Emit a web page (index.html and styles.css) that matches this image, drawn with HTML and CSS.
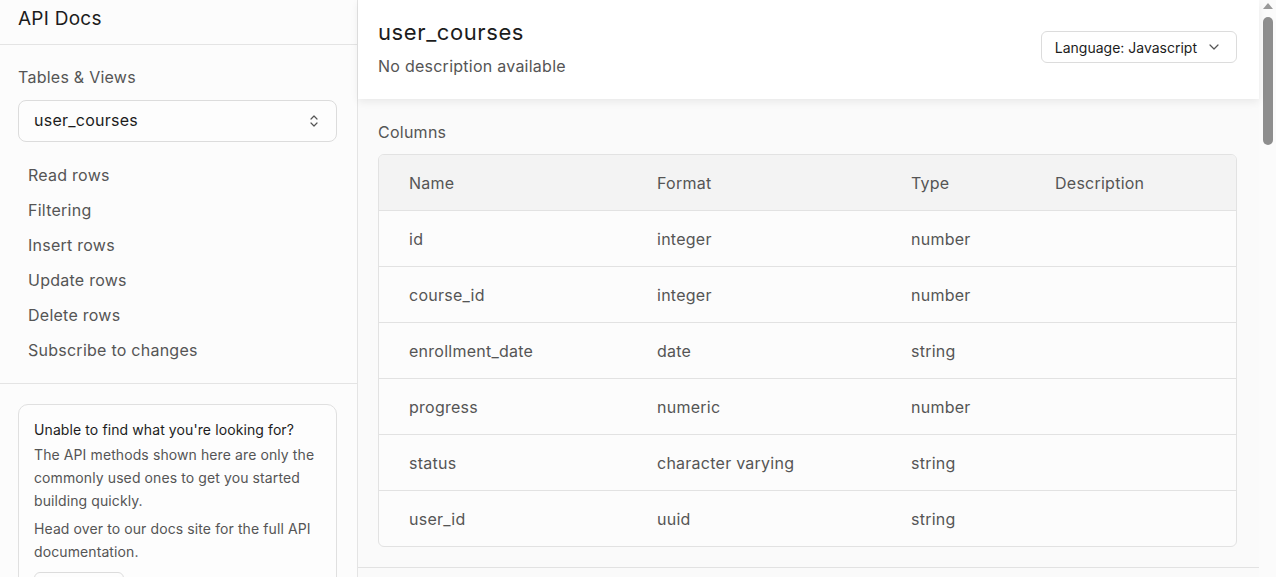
FILE: index.html
```html
<!DOCTYPE html>
<html>
<head>
<meta charset="utf-8">
<title>API Docs</title>
<link rel="stylesheet" href="styles.css">
</head>
<body>
<div class="app">
  <aside class="sidebar">
    <div class="side-head">API Docs</div>
    <div class="side-section">
      <div class="side-label">Tables &amp; Views</div>
      <div class="select">
        <span>user_courses</span>
        <svg class="updown" width="12" height="16" viewBox="0 0 12 16" fill="none" stroke="#555" stroke-width="1.2" stroke-linecap="round" stroke-linejoin="round"><path d="M3 6l3-3 3 3"/><path d="M3 10l3 3 3-3"/></svg>
      </div>
      <nav class="nav">
        <div class="nav-item">Read rows</div>
        <div class="nav-item">Filtering</div>
        <div class="nav-item">Insert rows</div>
        <div class="nav-item">Update rows</div>
        <div class="nav-item">Delete rows</div>
        <div class="nav-item">Subscribe to changes</div>
      </nav>
    </div>
    <div class="side-bottom">
      <div class="help-card">
        <div class="help-title">Unable to find what you're looking for?</div>
        <p class="help-text">The API methods shown here are only the commonly used ones to get you started building quickly.</p>
        <p class="help-text">Head over to our docs site for the full API documentation.</p>
        <div class="help-btn"></div>
      </div>
    </div>
  </aside>
  <main class="main">
    <div class="content">
      <header class="main-head">
        <div class="head-text">
          <h1 class="title">user_courses</h1>
          <div class="subtitle">No description available</div>
        </div>
        <div class="lang-btn">
          <span>Language: Javascript</span>
          <svg width="10" height="6" viewBox="0 0 10 6" fill="none" stroke="#555" stroke-width="1.2" stroke-linecap="round" stroke-linejoin="round"><path d="M1 1l4 4 4-4"/></svg>
        </div>
      </header>
      <section class="columns">
        <div class="section-label">Columns</div>
        <div class="table">
          <div class="row head"><div>Name</div><div>Format</div><div>Type</div><div>Description</div></div>
          <div class="row"><div>id</div><div>integer</div><div>number</div><div></div></div>
          <div class="row"><div>course_id</div><div>integer</div><div>number</div><div></div></div>
          <div class="row"><div>enrollment_date</div><div>date</div><div>string</div><div></div></div>
          <div class="row"><div>progress</div><div>numeric</div><div>number</div><div></div></div>
          <div class="row"><div>status</div><div>character varying</div><div>string</div><div></div></div>
          <div class="row"><div>user_id</div><div>uuid</div><div>string</div><div></div></div>
        </div>
      </section>
      <div class="next-divider"></div>
    </div>
    <div class="scrollbar">
      <div class="sb-arrow"></div>
      <div class="sb-thumb"></div>
    </div>
  </main>
</div>
</body>
</html>
```

FILE: styles.css
```css
* { box-sizing: border-box; }
html, body { margin: 0; padding: 0; height: 100%; }
body {
  font-family: Inter, "Noto Sans", sans-serif;
  color: #1c1c1c;
  background: #fafafa;
  overflow: hidden;
  letter-spacing: 0.25px;
}
.app { display: flex; height: 100vh; }

.sidebar {
  width: 358px;
  flex: none;
  border-right: 1px solid #e4e4e4;
  background: #fcfcfc;
  display: flex;
  flex-direction: column;
  overflow: hidden;
}
.side-head {
  height: 45px;
  border-bottom: 1px solid #e4e4e4;
  padding: 7px 18px 0;
  font-size: 19px;
  line-height: 24px;
  color: #1c1c1c;
  flex: none;
}
.side-section {
  padding: 21px 20px 15px 18px;
  border-bottom: 1px solid #e4e4e4;
  flex: none;
}
.side-label {
  font-size: 16px;
  line-height: 22px;
  color: #555;
  margin-bottom: 12px;
}
.select {
  height: 42px;
  border: 1px solid #dcdcdc;
  border-radius: 8px;
  background: #fdfdfd;
  display: flex;
  align-items: center;
  justify-content: space-between;
  padding: 0 16px 0 15px;
  font-size: 16px;
  color: #1c1c1c;
}
.select span { margin-top: -3px; }
.updown { display: block; }
.nav { padding: 16px 10px 0; display: flex; flex-direction: column; }
.nav-item {
  height: 35px;
  line-height: 35px;
  font-size: 16px;
  color: #555;
}
.side-bottom { padding: 20px 20px 20px 18px; }
.help-card {
  border: 1px solid #e0e0e0;
  border-radius: 10px;
  background: #fdfdfd;
  padding: 14px 15px 20px;
  letter-spacing: 0.1px;
}
.help-title {
  font-size: 14px;
  line-height: 22px;
  color: #1c1c1c;
  margin-bottom: 2px;
}
.help-text {
  margin: 0 0 5px;
  font-size: 14px;
  line-height: 23px;
  color: #555;
}
.help-btn {
  margin-top: 9px;
  width: 90px;
  height: 28px;
  border: 1px solid #dcdcdc;
  border-radius: 6px;
}

.main { flex: 1; display: flex; min-width: 0; }
.content { flex: 1; min-width: 0; }
.main-head {
  height: 99px;
  background: #fff;
  box-shadow: 0 3px 8px rgba(0, 0, 0, 0.07);
  display: flex;
  justify-content: space-between;
  align-items: flex-start;
  padding: 18px 22px 0 20px;
  position: relative;
}
.title {
  margin: 0;
  font-size: 22px;
  line-height: 28px;
  font-weight: 400;
  letter-spacing: 0.6px;
  color: #1c1c1c;
}
.subtitle {
  margin-top: 9px;
  font-size: 16px;
  line-height: 22px;
  color: #555;
}
.lang-btn {
  margin-top: 13px;
  height: 32px;
  border: 1px solid #dcdcdc;
  border-radius: 6px;
  display: flex;
  align-items: center;
  gap: 12px;
  padding: 0 17px 0 13px;
  font-size: 14px;
  letter-spacing: 0;
  color: #1c1c1c;
  background: #fff;
}
.columns { padding: 22px 22px 20px 20px; }
.section-label {
  font-size: 16px;
  line-height: 22px;
  color: #555;
  margin-bottom: 11px;
}
.table {
  border: 1px solid #e2e2e2;
  border-radius: 6px;
  background: #fcfcfc;
  overflow: hidden;
}
.row {
  display: grid;
  grid-template-columns: 248px 254px 144px 1fr;
  height: 56px;
  align-items: center;
  border-top: 1px solid #e2e2e2;
  font-size: 16px;
  color: #555;
}
.row > div { padding-left: 30px; }
.row.head { border-top: none; background: #f3f3f3; height: 55px; }
.next-divider {
  height: 1px;
  background: #e2e2e2;
}

.scrollbar {
  width: 17px;
  flex: none;
  background: #fbfbfb;
  display: flex;
  flex-direction: column;
  align-items: center;
  padding-top: 3px;
}
.sb-arrow {
  width: 0;
  height: 0;
  border-left: 5px solid transparent;
  border-right: 5px solid transparent;
  border-bottom: 6px solid #9a9a9a;
}
.sb-thumb {
  margin-top: 8px;
  width: 10px;
  height: 128px;
  background: #8e8e8e;
  border-radius: 5px;
}
```
